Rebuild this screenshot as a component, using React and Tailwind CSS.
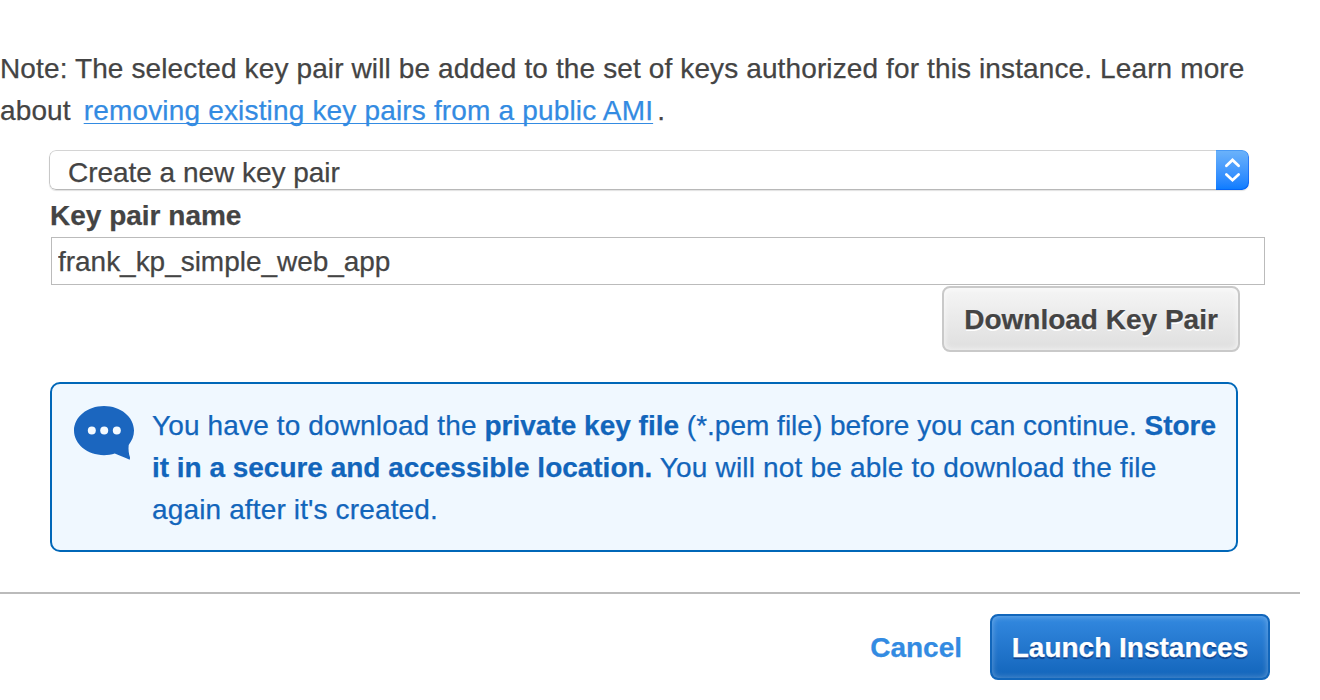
function SelectArrows() {
  return (
    <svg width="33" height="40" viewBox="0 0 33 40" fill="none" stroke="#fff" strokeWidth="2.8" strokeLinecap="round" strokeLinejoin="miter">
      <path d="M10.400 15.700 16.500 10l6.100 5.700" />
      <path d="M10.400 24.500 16.500 30.200l6.100-5.700" />
    </svg>
  );
}

function SpeechBubble() {
  return (
    <svg className="shrink-0" width="62" height="56" viewBox="0 0.6 62 56">
      <path
        fill="#1b66bf"
        d="M31 1.6C14.400 1.600 1 12.600 1 26.200S14.400 50.800 31 50.800c3.800 0 7.500-.6 10.800-1.600 4.800 1.800 9.600 3.900 14.900 6.200l.4-2.200c-1.400-3.800-1.900-8.200-1.400-12.700C59 36.500 61 31.500 61 26.200 61 12.600 47.600 1.600 31 1.600z"
      />
      <circle cx="18.800" cy="26.200" r="4" fill="#f4faff" />
      <circle cx="31.200" cy="26.200" r="4" fill="#f4faff" />
      <circle cx="43.800" cy="26.200" r="4" fill="#f4faff" />
    </svg>
  );
}

export default function App() {
  return (
    <main className="flex h-[700px] w-[1320px] flex-col overflow-hidden bg-white pt-12 font-['Liberation_Sans',Arial,sans-serif] text-[28px] leading-[42px] text-[#444] [-webkit-text-stroke:0.25px_currentColor]">
      <p className="tracking-[0.122px] whitespace-nowrap">
        Note: The selected key pair will be added to the set of keys authorized for this instance. Learn more
        <br />
        about
        <a href="#" className="ml-[13px] tracking-[0.17px] text-[#338be2] underline decoration-1 underline-offset-[3px] [text-decoration-skip-ink:none]">
          removing existing key pairs from a public AMI
        </a>
        <span className="ml-1">.</span>
      </p>

      <button
        type="button"
        className="mt-[18px] ml-[49px] flex h-10 w-[1200px] shrink-0 overflow-hidden rounded-[7px] text-left shadow-[0_1px_1px_rgba(0,0,0,0.12)]"
      >
        <span className="h-10 flex-1 rounded-l-[7px] border border-r-0 border-t-[#d4d4d4] border-b-[#b8b8b8] border-l-[#c8c8c8] pl-[18px] leading-[44px] tracking-[-0.03px]">
          Create a new key pair
        </span>
        <span className="h-10 w-[33px] rounded-r-[7px] bg-linear-to-b from-[#6cb3fa] to-[#067bff] shadow-[inset_-1px_-1px_0_rgba(0,80,240,0.5),inset_0_1px_0_rgba(40,130,240,0.5)]">
          <SelectArrows />
        </span>
      </button>

      <label htmlFor="name" className="mt-[5px] ml-[50px] font-bold">
        Key pair name
      </label>
      <input
        id="name"
        defaultValue="frank_kp_simple_web_app"
        className="ml-[51px] h-12 w-[1214px] shrink-0 border border-[#bbb] px-1.5 pt-0.5 tracking-[-0.03px] outline-none"
      />

      <button
        type="button"
        className="mt-px ml-[942px] h-[66px] w-[298px] shrink-0 rounded-lg border-2 border-[#c9c9c9] bg-linear-to-b from-[#f5f5f5] to-[#dfdfdf] pt-0.5 font-bold whitespace-nowrap shadow-[inset_0_0_6px_rgba(255,255,255,0.8)] [text-shadow:0_2px_0_#fff]"
      >
        Download Key Pair
      </button>

      <section className="mt-[30px] ml-[50px] flex h-[170px] w-[1188px] shrink-0 gap-[17px] rounded-[10px] border-2 border-[#0067b8] bg-[#f0f8ff] pt-[21px] pl-[21px] text-[#1265bb]">
        <SpeechBubble />
        <p className="whitespace-nowrap">
          <span className="tracking-[0.14px]">You have to download the </span>
          <b>private key file</b> (*.pem file) before you can continue. <b>Store</b>
          <br />
          <b className="tracking-[-0.02px]">it in a secure and accessible location.</b>
          <span className="tracking-[0.18px]"> You will not be able to download the file</span>
          <br />
          <span className="tracking-[0.14px]">again after it's created.</span>
        </p>
      </section>

      <footer className="mt-10 flex w-[1300px] items-center justify-end gap-7 border-t-2 border-[#bbb] pt-5 pr-[30px] font-bold">
        <a href="#" className="pt-0.5 text-[#338be2]">Cancel</a>
        <button
          type="button"
          className="h-[66px] w-[280px] rounded-lg border-2 border-[#1166bb] bg-linear-to-b from-[#3389e0] to-[#1265bb] pt-0.5 whitespace-nowrap text-white shadow-[inset_0_0_6px_rgba(255,255,255,0.35)] [text-shadow:0_2px_1px_rgba(10,50,120,0.75)]"
        >
          Launch Instances
        </button>
      </footer>
    </main>
  );
}
